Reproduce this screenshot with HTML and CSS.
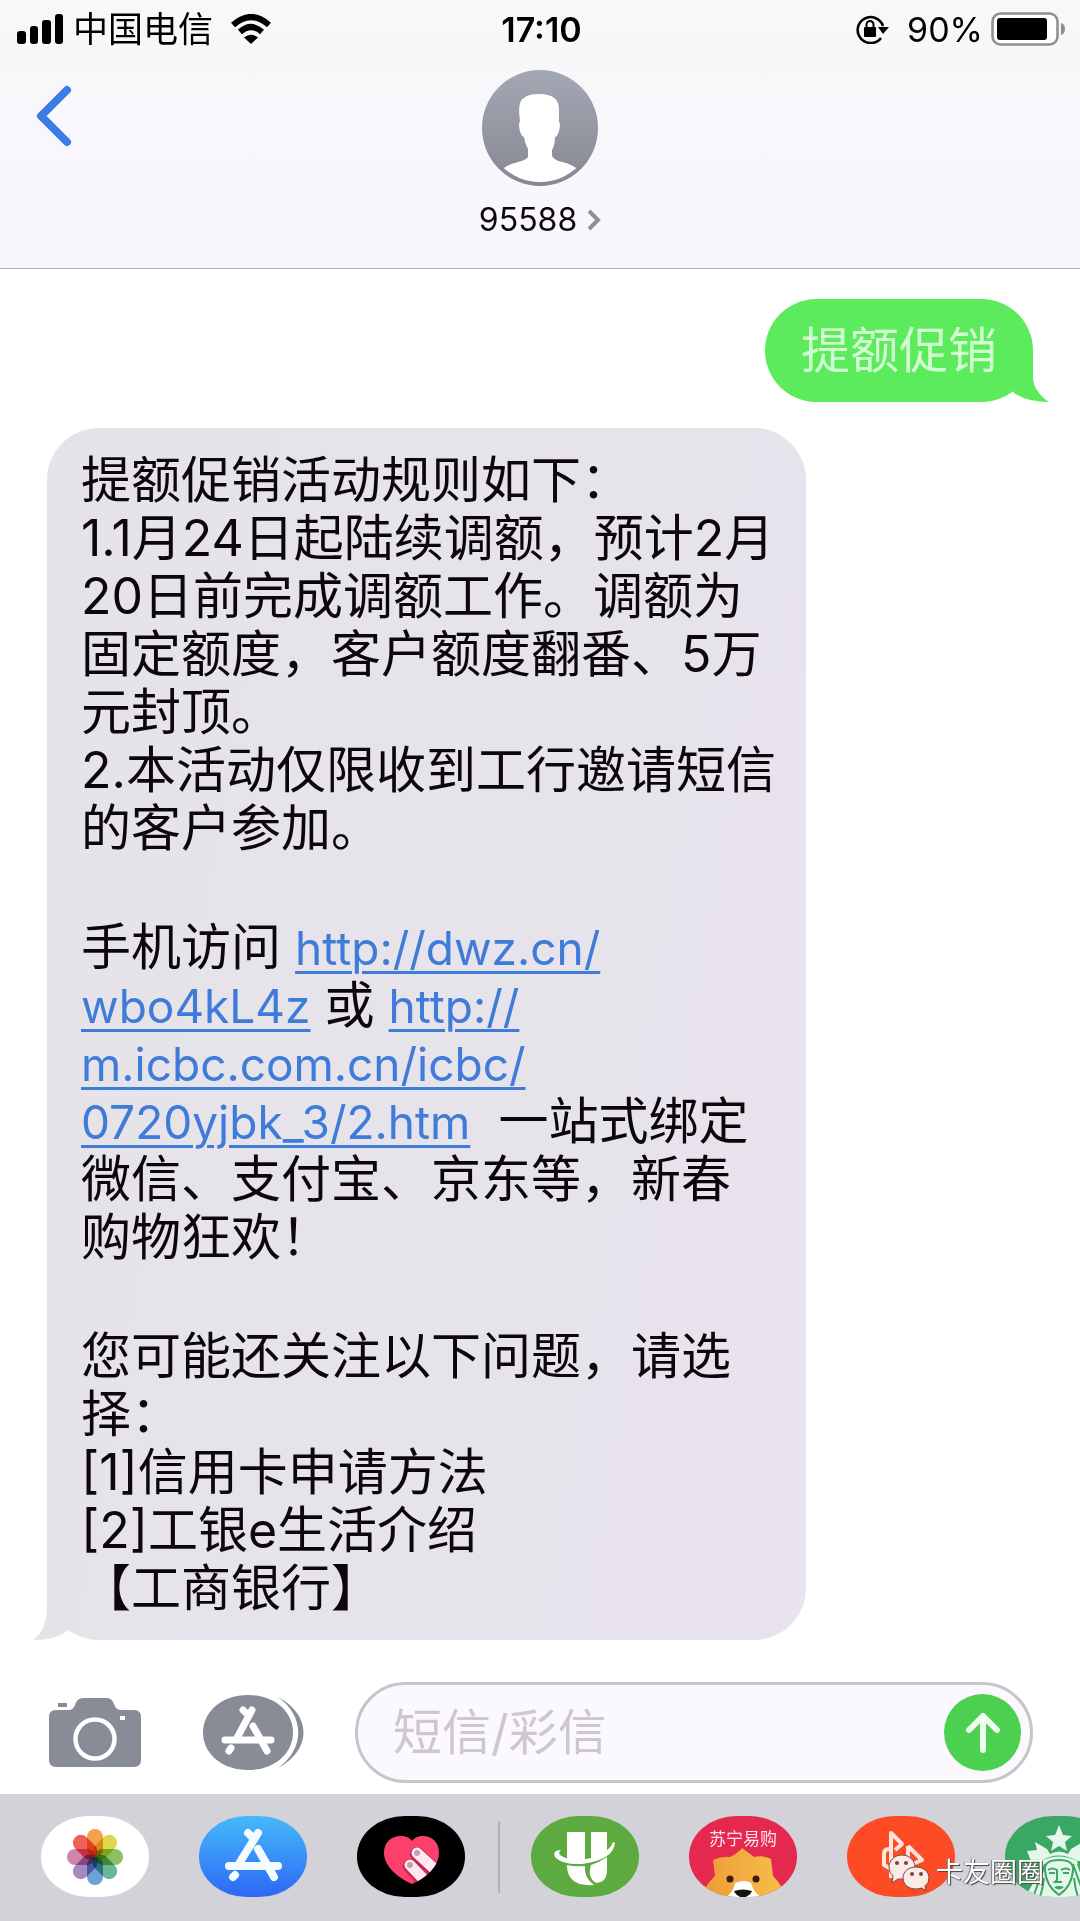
FILE: index.html
```html
<!DOCTYPE html>
<html lang="zh-CN">
<head>
    <meta charset="UTF-8">
    <meta name="viewport" content="width=device-width, initial-scale=1.0">
    <title>95588</title>
    <link rel="stylesheet" href="styles.css">
</head>
<body>
    <header class="header">
        <div class="status">
            <div class="status-left">
                <svg width="46" height="30" viewBox="0 0 46 30">
                    <rect x="0" y="17" width="9" height="13" rx="3"/>
                    <rect x="13" y="12" width="8" height="18" rx="3"/>
                    <rect x="25" y="6" width="9" height="24" rx="3"/>
                    <rect x="38" y="0" width="8" height="30" rx="3"/>
                </svg>
                <span class="carrier">中国电信</span>
                <svg class="wifi" width="42" height="30" viewBox="0 0 42 30">
                    <path d="M3 11Q21 -5 39 11M10 18Q21 8 32 18" fill="none" stroke="#000" stroke-width="6"/>
                    <path d="M21 30L14 23.500Q21 18 28 23.500Z"/>
                </svg>
            </div>
            <time class="clock">17:10</time>
            <div class="status-right">
                <svg width="34" height="30" viewBox="0 0 34 30">
                    <path d="M28 12A13 13 0 1 0 26 24" fill="none" stroke="#000" stroke-width="2.500"/>
                    <path d="M23 13H34L28 20Z"/>
                    <rect x="9" y="13" width="12" height="10" rx="1"/>
                    <path d="M11.500 14V10.500A3.500 3.500 0 0 1 18.500 10.500V14" fill="none" stroke="#000" stroke-width="2"/>
                </svg>
                <span class="percent">90%</span>
                <svg width="75" height="34" viewBox="0 0 75 34">
                    <rect x="1.500" y="1.500" width="65" height="31" rx="8" fill="#fff" stroke="#8f8f8f" stroke-width="2.500"/>
                    <rect x="6" y="6" width="50" height="22" rx="3"/>
                    <path d="M70 11Q74 12 74 17Q74 22 70 23Z" fill="#8f8f8f"/>
                </svg>
            </div>
        </div>
        <div class="contact-bar">
            <button class="back" aria-label="返回">
                <svg width="36" height="62" viewBox="0 0 36 62">
                    <path d="M31 5L5 31L31 57" fill="none" stroke="#3b7be6" stroke-width="8" stroke-linecap="round" stroke-linejoin="round"/>
                </svg>
            </button>
            <button class="contact">
                <svg width="116" height="116" viewBox="0 0 116 116">
                    <defs>
                        <linearGradient id="avatar-bg" x1="0" y1="0" x2="0" y2="1">
                            <stop offset="0" stop-color="#a4a8b4"/>
                            <stop offset="1" stop-color="#858892"/>
                        </linearGradient>
                        <clipPath id="avatar-clip"><circle cx="58" cy="58" r="54"/></clipPath>
                    </defs>
                    <circle cx="58" cy="58" r="58" fill="url(#avatar-bg)"/>
                    <path clip-path="url(#avatar-clip)" fill="#fff" d="M38 51Q35 31 42 28Q46 24 57 24Q77 24 77 39V52Q79 53 77 61Q75 67 73 67Q73 75 70 80V86Q72 90 80 92Q90 94 98 101V116H18V101Q26 94 36 92Q44 90 46 87V79Q43 74 42 67Q39 66 38 61Q36 54 38 51Z"/>
                </svg>
                <span class="contact-name">95588
                    <svg width="14" height="22" viewBox="0 0 14 22">
                        <path d="M2 2L11 11L2 20" fill="none" stroke="#8e8e93" stroke-width="4"/>
                    </svg>
                </span>
            </button>
        </div>
    </header>

    <main class="thread">
        <div class="bubble sent">
            <p>提额促销</p>
            <svg class="tail" width="42" height="52" viewBox="0 0 42 52">
                <path d="M26 0V28Q27 42 42 52Q20 52 7 43L0 30V0Z" fill="#5ceb5c"/>
            </svg>
        </div>
        <div class="bubble received">
            <p>提额促销活动规则如下：<br>
            1.1月24日起陆续调额，预计2月<br>
            20日前完成调额工作。调额为<br>
            固定额度，客户额度翻番、5万<br>
            元封顶。<br>
            2.本活动仅限收到工行邀请短信<br>
            的客户参加。</p>
            <p>手机访问 <a href="#">http://dwz.cn/<br>
            wbo4kL4z</a> 或 <a href="#">http://<br>
            m.icbc.com.cn/icbc/<br>
            0720yjbk_3/2.htm</a>&nbsp; 一站式绑定<br>
            微信、支付宝、京东等，新春<br>
            购物狂欢！</p>
            <p>您可能还关注以下问题，请选<br>
            择：<br>
            [1]信用卡申请方法<br>
            [2]工银e生活介绍<br>
            【工商银行】</p>
            <svg class="tail" width="42" height="52" viewBox="0 0 42 52">
                <path d="M14 0V18Q14 42 0 52Q22 52 34 43L42 30V0Z" fill="#e5e3e8"/>
            </svg>
        </div>
    </main>

    <form class="compose">
        <button type="button" aria-label="相机">
            <svg width="92" height="69" viewBox="0 0 92 69">
                <g fill="#878c97">
                    <rect x="9" y="5" width="9" height="4"/>
                    <path d="M7 12H20Q24 12 26 7Q28 0 34 0H58Q63 0 65 6Q67 12 72 12H85Q92 12 92 19V62Q92 69 85 69H7Q0 69 0 62V19Q0 12 7 12Z"/>
                </g>
                <circle cx="46" cy="41" r="19.500" fill="none" stroke="#fff" stroke-width="4.500"/>
                <rect x="71" y="18" width="5" height="4" fill="#fff"/>
            </svg>
        </button>
        <button type="button" class="apps-button" aria-label="应用">
            <svg width="101" height="75" viewBox="0 0 101 75">
                <path d="M45 0C72 0 90 17 90 37.500S72 75 45 75S0 58 0 37.500S18 0 45 0Z" fill="#878c97"/>
                <path d="M75 2C109 20 109 55 75 73C102 54 102 21 75 2Z" fill="#878c97"/>
                <path d="M49 15L34 43M40 15L46 21M50 31L64 56M28 53L26 56M22 45H68" fill="none" stroke="#fff" stroke-width="7" stroke-linecap="round"/>
            </svg>
        </button>
        <div class="field">
            <input type="text" placeholder="短信/彩信" aria-label="短信/彩信">
            <button type="submit" class="send" aria-label="发送">
                <svg width="36" height="42" viewBox="0 0 36 42">
                    <path d="M18 4V38M4 18L18 4L32 18" fill="none" stroke="#effff0" stroke-width="6" stroke-linecap="round" stroke-linejoin="round"/>
                </svg>
            </button>
        </div>
    </form>

    <nav class="app-strip">
        <button class="app photos" aria-label="照片">
            <svg viewBox="0 0 108 81">
                <g class="petals" transform="translate(54 41)">
                    <rect x="-8" y="-28" width="16" height="28" rx="8" fill="#f5a04b"/>
                    <rect x="-8" y="-28" width="16" height="28" rx="8" fill="#ded94b" transform="rotate(45)"/>
                    <rect x="-8" y="-28" width="16" height="28" rx="8" fill="#8dc063" transform="rotate(90)"/>
                    <rect x="-8" y="-28" width="16" height="28" rx="8" fill="#68b697" transform="rotate(135)"/>
                    <rect x="-8" y="-28" width="16" height="28" rx="8" fill="#6ba1d6" transform="rotate(180)"/>
                    <rect x="-8" y="-28" width="16" height="28" rx="8" fill="#a58ac2" transform="rotate(225)"/>
                    <rect x="-8" y="-28" width="16" height="28" rx="8" fill="#cf85ab" transform="rotate(270)"/>
                    <rect x="-8" y="-28" width="16" height="28" rx="8" fill="#ec625a" transform="rotate(315)"/>
                </g>
            </svg>
        </button>
        <button class="app store" aria-label="App Store">
            <svg viewBox="0 0 108 81">
                <path d="M59 17L41 46M49 17L55 23M59 33L75 61M36 59L34 61M30 50H79" fill="none" stroke="#f4fbff" stroke-width="8" stroke-linecap="round"/>
            </svg>
        </button>
        <button class="app touch" aria-label="Digital Touch">
            <svg viewBox="0 0 108 81">
                <defs>
                    <clipPath id="heart">
                        <path d="M55 25C50 17 27 17 27 37C27 50 41 62 55 68C69 62 82 50 82 37C82 17 60 17 55 25Z"/>
                    </clipPath>
                </defs>
                <g clip-path="url(#heart)">
                    <rect width="108" height="81" fill="#fb406b"/>
                    <path d="M60 38L84 60M53 50L74 72" stroke="#c02650" stroke-width="14" stroke-linecap="round"/>
                    <path d="M60 37L84 59M53 49L74 71" stroke="#ffe8f1" stroke-width="11" stroke-linecap="round"/>
                    <circle cx="60" cy="37" r="3" fill="#bba4ad"/>
                    <circle cx="53" cy="49" r="3" fill="#bba4ad"/>
                </g>
            </svg>
        </button>
        <span class="divider"></span>
        <button class="app green" aria-label="U">
            <svg viewBox="0 0 108 81">
                <g fill="#fff">
                    <path d="M36 16H54V46Q45 46 36 43Z"/>
                    <path d="M60 16H76V35Q69 41 60 44Z"/>
                    <path d="M36 49Q45 51 54 50Q53 62 63 69Q36 71 36 49Z"/>
                    <path d="M60 49Q69 46 76 41V56Q75 67 65 67Q56 61 60 49Z"/>
                    <path d="M30 34Q21 34 24 41Q31 49 51 48Q82 44 84 27L82 26Q78 37 60 42Q40 47 29 39Q27 36 30 34Z"/>
                </g>
            </svg>
        </button>
        <button class="app suning" aria-label="苏宁易购">
            <svg viewBox="0 0 108 81">
                <defs>
                    <linearGradient id="mane" x1="0" y1="0" x2="1" y2="0">
                        <stop offset="0" stop-color="#ef9a35"/>
                        <stop offset="1" stop-color="#f6c04b"/>
                    </linearGradient>
                </defs>
                <text x="54" y="29" class="app-word">苏宁易购</text>
                <path d="M12 84Q15 70 26 60L24 44Q32 40 41 41Q48 38 53 32Q60 37 65 41Q75 39 82 43L84 60Q94 69 96 84Z" fill="url(#mane)"/>
                <path d="M34 84Q45 76 46 67Q55 63 62 67Q65 78 76 84Z" fill="#fff"/>
                <circle cx="41" cy="63" r="3.500" fill="#3a1c10"/>
                <circle cx="67" cy="63" r="3.500" fill="#3a1c10"/>
                <path d="M45 75Q54 72 63 75Q61 80 54 82Q47 80 45 75Z" fill="#171311"/>
            </svg>
        </button>
        <button class="app orange" aria-label="音乐">
            <svg viewBox="0 0 108 81">
                <path d="M44 62V17L55 28L48 34M42 33Q37 33 37 38V49L44 53M61 30L75 44L61 50V30M48 50L62 54" fill="none" stroke="#ffe5da" stroke-width="4" stroke-linejoin="round"/>
            </svg>
        </button>
        <button class="app coffee" aria-label="星巴克">
            <svg viewBox="0 0 108 81">
                <g fill="#e4f7ea">
                    <path d="M54 9L58 19L67 20L60 26L62 35L54 30L46 35L48 26L41 20L50 19Z"/>
                    <path d="M30 26L42 33L45 38Q54 33 63 38L66 33L78 26L76 34L86 35L82 45H72Q54 34 36 45H26L22 35L32 34Z"/>
                    <path d="M36 45Q54 36 72 45Q76 59 88 81H20Q33 60 36 45Z"/>
                </g>
                <path d="M40 48Q36 60 28 81M35 48Q30 64 20 78M68 48Q72 60 80 81M73 48Q78 64 88 78M39 62Q38 72 35 81M69 62Q70 72 73 81" fill="none" stroke="#3aa864" stroke-width="2"/>
                <path d="M54 44Q39 44 40 54Q41 70 54 79Q67 70 68 54Q69 44 54 44Z" fill="#e4f7ea" stroke="#3aa864" stroke-width="2"/>
                <path d="M43 54Q47 51 52 54V64L50 66H57M65 54Q61 51 56 54M44 57H50M58 57H64" fill="none" stroke="#3aa864" stroke-width="2"/>
                <path d="M49 71Q54 69 59 71Q54 76 49 71Z" fill="#3aa864"/>
            </svg>
        </button>
        <div class="watermark">
            <svg width="42" height="40" viewBox="0 0 42 40">
                <g fill="#fdeae6" stroke="#6d4a46" stroke-width="1">
                    <path d="M14 2C6 2 1 8 1 14Q1 20 5 23L4 30L10 26Q27 28 27 14C27 8 22 2 14 2Z"/>
                    <path d="M28 14C20 14 15 19 15 25S20 36 28 36Q31 36 34 35L38 38L37 33Q41 30 41 25C41 19 36 14 28 14Z"/>
                </g>
                <g fill="#6d4a46">
                    <circle cx="9" cy="10" r="2"/>
                    <circle cx="18" cy="10" r="2"/>
                    <circle cx="24" cy="21" r="2"/>
                    <circle cx="33" cy="21" r="2"/>
                </g>
            </svg>
            <span>卡友圈圈</span>
        </div>
    </nav>
</body>
</html>
```
FILE: styles.css
```css
*{
    box-sizing: border-box;
}
body{
    margin: 0;
    background-color: #fff;
    color: #0b070d;
    font-family: Inter, "Noto Sans CJK SC", sans-serif;
    overflow-x: hidden;
}
button{
    padding: 0;
    border: none;
    background: none;
    color: inherit;
    font-family: inherit;
    cursor: pointer;
}
svg{
    display: block;
}
p{
    margin: 0;
}

/* status bar and contact */
.header{
    background: linear-gradient(#f7f8f7, #f8f7fb 40%, #f9f6fb);
    border-bottom: 1px solid #b4b2b6;
}
.status{
    display: grid;
    grid-template-columns: 1fr auto 1fr;
    align-items: center;
    height: 58px;
    padding: 0 14px 0 17px;
    color: #000;
}
.status-left, .status-right{
    display: flex;
    align-items: center;
}
.status-right{
    justify-content: flex-end;
}
.carrier{
    margin-left: 10px;
    font-size: 35px;
    line-height: 48px;
}
.wifi{
    margin-left: 17px;
}
.clock{
    font-size: 34px;
    font-weight: 600;
}
.percent{
    margin: 0 8px 0 18px;
    font-size: 34px;
}
.contact-bar{
    display: grid;
    grid-template-columns: 1fr auto 1fr;
    align-items: start;
    padding: 12px 36px 28px;
}
.back{
    justify-self: start;
    margin-top: 15px;
}
.contact{
    display: flex;
    flex-direction: column;
    align-items: center;
    gap: 14px;
}
.contact-name{
    display: flex;
    align-items: center;
    gap: 10px;
    font-size: 32px;
    line-height: 40px;
}

/* messages */
.thread{
    display: flex;
    flex-direction: column;
    gap: 26px;
    padding: 30px 47px 42px;
}
.bubble{
    position: relative;
    border-radius: 52px;
    padding: 23px 34px;
    font-size: 50px;
    line-height: 58px;
}
.sent{
    align-self: flex-end;
    padding: 23px 36px 22px;
    background-color: #5ceb5c;
    color: #d2fdd2;
    font-size: 49px;
}
.received{
    width: 77%;
    background: linear-gradient(100deg, #e5e3e8, #e8e3ed);
    white-space: nowrap;
}
.received p + p{
    margin-top: 61px;
}
.received a{
    color: #3f7bd8;
    font-size: 46px;
    line-height: 50px;
    text-decoration-thickness: 3px;
    text-underline-offset: 6px;
}
.tail{
    position: absolute;
    bottom: 0;
}
.sent .tail{
    right: -16px;
}
.received .tail{
    left: -14px;
}

/* compose row */
.compose{
    display: flex;
    align-items: center;
    padding: 0 47px 11px 49px;
}
.apps-button{
    margin: 0 51px 0 62px;
}
.field{
    flex: 1;
    display: flex;
    align-items: center;
    min-width: 0;
    padding: 9px;
    border: 3px solid #c9c4cc;
    border-radius: 51px;
    background-color: #fcf9fe;
}
.field input{
    flex: 1;
    min-width: 0;
    padding: 0 26px;
    border: none;
    outline: none;
    background: none;
    font-family: inherit;
    font-size: 49px;
    line-height: 70px;
}
.field input::placeholder{
    color: #cdc8cf;
}
.send{
    display: flex;
    align-items: center;
    justify-content: center;
    width: 77px;
    height: 77px;
    border-radius: 50%;
    background-color: #4bd04f;
}

/* app strip */
.app-strip{
    position: relative;
    display: flex;
    align-items: center;
    gap: 50px;
    padding: 22px 0 24px 41px;
    background-color: #d2d2d8;
    overflow: hidden;
}
.app{
    flex: none;
    width: 108px;
    height: 81px;
    border-radius: 48px / 40px;
    overflow: hidden;
}
.petals rect{
    mix-blend-mode: multiply;
}
.photos{
    background-color: #fff;
}
.store{
    background: linear-gradient(#46b9fb, #2c68f5);
}
.touch{
    background-color: #000;
}
.green{
    background-color: #5dab40;
}
.suning{
    background-color: #e5284d;
}
.orange{
    background-color: #fd4c25;
}
.coffee{
    background-color: #3aa864;
}
.app-word{
    fill: #ffe3ea;
    font-size: 17px;
    text-anchor: middle;
}
.divider{
    flex: none;
    width: 2px;
    height: 72px;
    margin: 0 -19px 0 -17px;
    background-color: #b1b0b8;
}
.watermark{
    position: absolute;
    right: 36px;
    bottom: 28px;
    display: flex;
    align-items: center;
    gap: 6px;
    color: #fff;
    font-size: 27px;
    line-height: 40px;
    text-shadow: 1px 1px 1px #444, -1px 0 1px #777;
}
```
